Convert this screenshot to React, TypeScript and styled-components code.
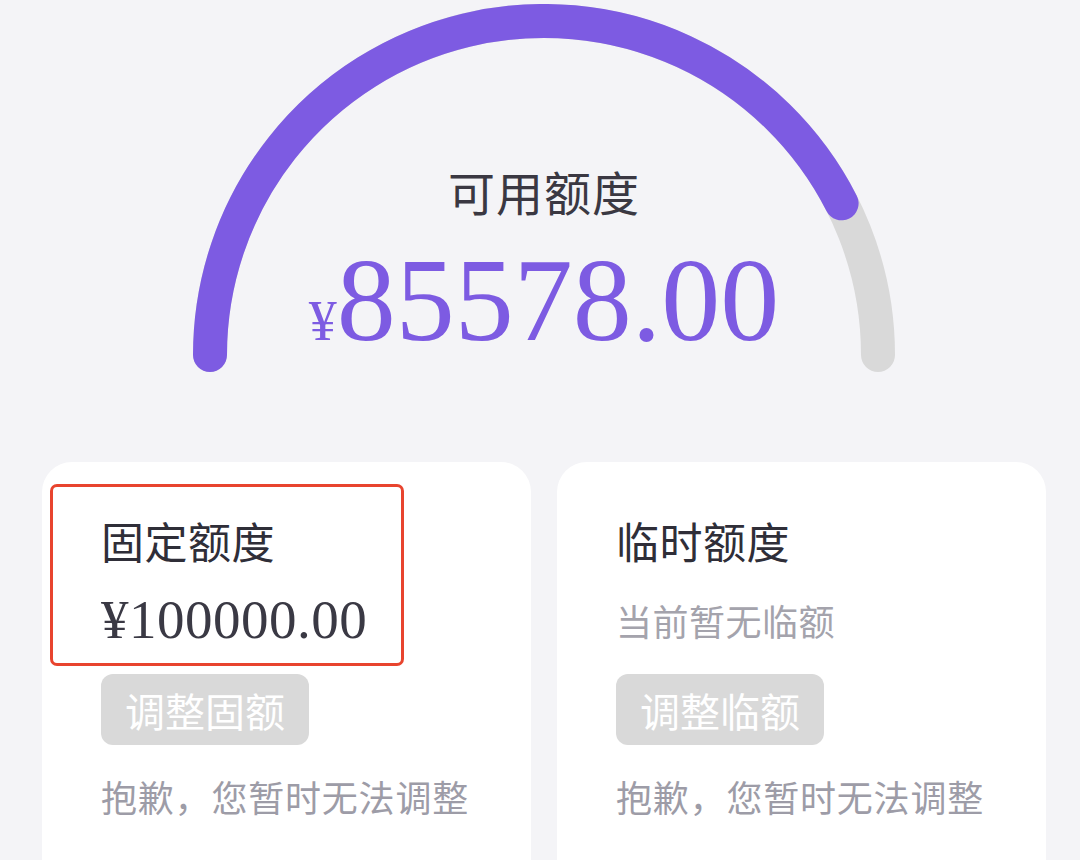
import React from "react";
import styled, { createGlobalStyle } from "styled-components";

const GlobalStyle = createGlobalStyle`
  html, body {
    margin: 0;
    padding: 0;
    background: #f4f4f7;
    overflow: hidden;
  }
  body {
    font-family: "Noto Sans CJK SC", "Noto Sans", sans-serif;
  }
`;

const PURPLE = "#7d5be2";

const Page = styled.div`
  width: 1080px;
  height: 860px;
  box-sizing: border-box;
  padding: 0 34px 0 42px;
  display: flex;
  flex-direction: column;
  background: #f4f4f7;
  overflow: hidden;
`;

const Gauge = styled.section`
  position: relative;
  flex-shrink: 0;
  height: 462px;
  display: flex;
  flex-direction: column;
  align-items: center;
`;

const GaugeSvg = styled.svg`
  display: block;
  margin-top: 4px;
  width: 702px;
  height: 368px;
`;

const GaugeText = styled.div`
  position: absolute;
  top: 168px;
  left: 0;
  right: 0;
  display: flex;
  flex-direction: column;
  align-items: center;
`;

const GaugeLabel = styled.div`
  font-size: 47px;
  line-height: 46px;
  color: #3a3842;
  letter-spacing: 1px;
`;

const GaugeValue = styled.div`
  margin-top: 28px;
  font-family: "Liberation Serif", "Times New Roman", serif;
  color: ${PURPLE};
  line-height: 118px;
  white-space: nowrap;
`;

const Currency = styled.span<{ $size: number }>`
  font-size: ${(p) => p.$size}px;
`;

const Big = styled.span`
  font-size: 118px;
`;

const Cards = styled.div`
  flex-shrink: 0;
  display: grid;
  grid-template-columns: 1fr 1fr;
  gap: 26px;
`;

const Card = styled.div`
  position: relative;
  background: #ffffff;
  border-radius: 30px;
  height: 440px;
  box-sizing: border-box;
  padding: 56px 0 0 59px;
  display: flex;
  flex-direction: column;
  align-items: flex-start;
`;

const Highlight = styled.div`
  position: absolute;
  left: 8px;
  top: 22px;
  width: 354px;
  height: 182px;
  box-sizing: border-box;
  border: 3px solid #e8442e;
  border-radius: 7px;
  pointer-events: none;
`;

const Title = styled.div`
  font-size: 43px;
  line-height: 44px;
  color: #2f2e38;
  letter-spacing: 0.5px;
`;

const SecondRow = styled.div`
  margin-top: 31px;
  height: 54px;
  display: flex;
  align-items: center;
`;

const Amount = styled.div`
  font-family: "Liberation Serif", "Times New Roman", serif;
  font-size: 55px;
  line-height: 54px;
  color: #3a3944;
  letter-spacing: 0.5px;
`;

const Muted = styled.div`
  font-size: 36px;
  line-height: 36px;
  color: #a4a3ac;
  letter-spacing: 0.5px;
`;

const AdjustButton = styled.button`
  margin-top: 27px;
  height: 71px;
  padding: 0 24px;
  border: none;
  border-radius: 12px;
  background: #d9d9d9;
  color: #ffffff;
  font-family: "Noto Sans CJK SC", "Noto Sans", sans-serif;
  font-size: 40px;
  line-height: 40px;
  cursor: not-allowed;
`;

const Footer = styled.div`
  margin-top: 33px;
  font-size: 36px;
  line-height: 36px;
  color: #9d9ca7;
  letter-spacing: 0.8px;
`;

function Arc({ ratio }: { ratio: number }) {
  const cx = 351;
  const cy = 351;
  const r = 334;
  const endAngle = Math.PI - ratio * Math.PI;
  const ex = cx + r * Math.cos(endAngle);
  const ey = cy - r * Math.sin(endAngle);
  return (
    <GaugeSvg viewBox="0 0 702 368">
      <path
        d={`M ${cx - r} ${cy} A ${r} ${r} 0 0 1 ${cx + r} ${cy}`}
        fill="none"
        stroke="#d9d9d9"
        strokeWidth={34}
        strokeLinecap="round"
      />
      <path
        d={`M ${cx - r} ${cy} A ${r} ${r} 0 0 1 ${ex.toFixed(2)} ${ey.toFixed(2)}`}
        fill="none"
        stroke={PURPLE}
        strokeWidth={34}
        strokeLinecap="round"
      />
    </GaugeSvg>
  );
}

export default function App() {
  return (
    <>
      <GlobalStyle />
      <Page>
        <Gauge>
          <Arc ratio={0.85} />
          <GaugeText>
            <GaugeLabel>可用额度</GaugeLabel>
            <GaugeValue>
              <Currency $size={56}>¥</Currency>
              <Big>85578.00</Big>
            </GaugeValue>
          </GaugeText>
        </Gauge>
        <Cards>
          <Card>
            <Highlight />
            <Title>固定额度</Title>
            <SecondRow>
              <Amount>¥100000.00</Amount>
            </SecondRow>
            <AdjustButton disabled>调整固额</AdjustButton>
            <Footer>抱歉，您暂时无法调整</Footer>
          </Card>
          <Card>
            <Title>临时额度</Title>
            <SecondRow>
              <Muted>当前暂无临额</Muted>
            </SecondRow>
            <AdjustButton disabled>调整临额</AdjustButton>
            <Footer>抱歉，您暂时无法调整</Footer>
          </Card>
        </Cards>
      </Page>
    </>
  );
}
